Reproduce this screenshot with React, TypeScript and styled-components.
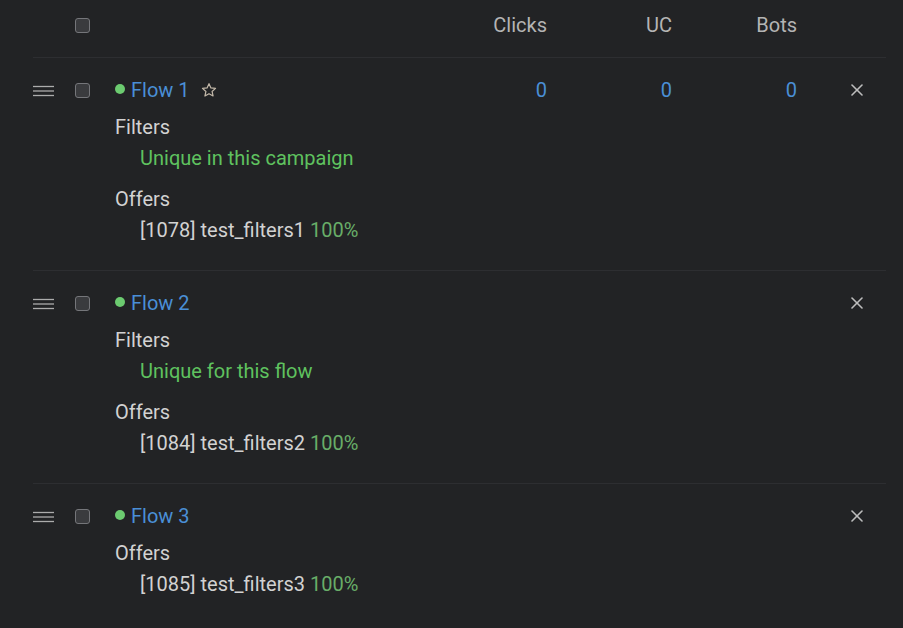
import React, { FC } from 'react';
import styled, { createGlobalStyle } from 'styled-components';

const colors = {
  bg: '#222325',
  divider: '#2d2e31',
  header: '#b4b4b4',
  text: '#d2d2d2',
  blue: '#4a8fd6',
  green: '#5fc25f',
  greenMuted: '#68ad68',
  dot: '#6ccb70',
  icon: '#bdbdbd',
};

const GlobalStyle = createGlobalStyle`
  html, body {
    margin: 0;
    padding: 0;
    background: ${colors.bg};
  }
  body {
    font-family: Roboto, 'Noto Sans', sans-serif;
    font-size: 20px;
    line-height: 24px;
    color: ${colors.text};
  }
`;

const Page = styled.div`
  width: 903px;
  height: 628px;
  box-sizing: border-box;
  padding: 0 17px 0 33px;
  overflow: hidden;
  background: ${colors.bg};
`;

const RowGrid = styled.div`
  display: grid;
  grid-template-columns: 42px 40px 307px 125px 125px 125px 89px;
  align-items: center;
`;

const TableHeader = styled(RowGrid)`
  height: 58px;
  padding-bottom: 7px;
  box-sizing: border-box;
  border-bottom: 1px solid ${colors.divider};
  color: ${colors.header};
`;

const Stat = styled.div<{ $head?: boolean }>`
  text-align: right;
  color: ${(p) => (p.$head ? colors.header : colors.blue)};
`;

const Checkbox = styled.span`
  display: block;
  width: 15px;
  height: 15px;
  box-sizing: border-box;
  border: 1.5px solid #75767a;
  border-radius: 3px;
  background: #3a3b3e;
`;

const FlowRow = styled.div<{ $last?: boolean }>`
  padding: 20px 0 28px;
  border-bottom: 1px solid ${(p) => (p.$last ? 'transparent' : colors.divider)};
`;

const Handle = styled.svg`
  display: block;
  margin-top: 1px;
`;

const NameCell = styled.div`
  display: flex;
  align-items: center;
`;

const Dot = styled.span`
  flex: none;
  width: 10px;
  height: 10px;
  border-radius: 50%;
  background: ${colors.dot};
  margin-right: 6px;
  margin-top: -2px;
`;

const FlowName = styled.span`
  color: ${colors.blue};
`;

const StarIcon = styled.svg`
  flex: none;
  margin-left: 11px;
  margin-top: -1px;
`;

const CloseCell = styled.div`
  padding-left: 54px;
  display: flex;
  align-items: center;
`;

const Body = styled.div`
  margin-left: 82px;
`;

const Section = styled.div`
  margin-top: 13px;
  & + & {
    margin-top: 17px;
  }
`;

const Item = styled.div<{ $green?: boolean }>`
  margin-top: 7px;
  padding-left: 25px;
  color: ${(p) => (p.$green ? colors.green : colors.text)};
`;

const Share = styled.span`
  color: ${colors.greenMuted};
`;

const DragHandle: FC = () => (
  <Handle width="21" height="12" viewBox="0 0 21 12">
    <g stroke="#acacac" strokeWidth="1.3">
      <line x1="0" y1="1.5" x2="21" y2="1.5" />
      <line x1="0" y1="6" x2="21" y2="6" />
      <line x1="0" y1="10.5" x2="21" y2="10.5" />
    </g>
  </Handle>
);

const Star: FC = () => (
  <StarIcon width="16" height="16" viewBox="0 0 24 24">
    <polygon
      points="12,2.5 14.9,8.9 21.8,9.6 16.6,14.2 18.1,21 12,17.5 5.9,21 7.4,14.2 2.2,9.6 9.1,8.9"
      fill="none"
      stroke="#c4b9aa"
      strokeWidth="1.8"
      strokeLinejoin="round"
    />
  </StarIcon>
);

const CloseIcon: FC = () => (
  <svg width="12" height="12" viewBox="0 0 12 12">
    <g stroke={colors.icon} strokeWidth="1.6" strokeLinecap="round">
      <line x1="1" y1="1" x2="11" y2="11" />
      <line x1="11" y1="1" x2="1" y2="11" />
    </g>
  </svg>
);

type Offer = { id: number; name: string; share: number };
type Flow = {
  name: string;
  starred?: boolean;
  stats?: [number, number, number];
  filters?: string[];
  offers: Offer[];
};

const flows: Flow[] = [
  {
    name: 'Flow 1',
    starred: true,
    stats: [0, 0, 0],
    filters: ['Unique in this campaign'],
    offers: [{ id: 1078, name: 'test_filters1', share: 100 }],
  },
  {
    name: 'Flow 2',
    filters: ['Unique for this flow'],
    offers: [{ id: 1084, name: 'test_filters2', share: 100 }],
  },
  {
    name: 'Flow 3',
    offers: [{ id: 1085, name: 'test_filters3', share: 100 }],
  },
];

const FlowItem: FC<{ flow: Flow; last?: boolean }> = ({ flow, last }) => (
  <FlowRow $last={last}>
    <RowGrid>
      <DragHandle />
      <Checkbox />
      <NameCell>
        <Dot />
        <FlowName>{flow.name}</FlowName>
        {flow.starred && <Star />}
      </NameCell>
      <Stat>{flow.stats ? flow.stats[0] : ''}</Stat>
      <Stat>{flow.stats ? flow.stats[1] : ''}</Stat>
      <Stat>{flow.stats ? flow.stats[2] : ''}</Stat>
      <CloseCell>
        <CloseIcon />
      </CloseCell>
    </RowGrid>
    <Body>
      {flow.filters && (
        <Section>
          Filters
          {flow.filters.map((f) => (
            <Item key={f} $green>
              {f}
            </Item>
          ))}
        </Section>
      )}
      <Section>
        Offers
        {flow.offers.map((o) => (
          <Item key={o.id}>
            [{o.id}] {o.name} <Share>{o.share}%</Share>
          </Item>
        ))}
      </Section>
    </Body>
  </FlowRow>
);

const App: FC = () => (
  <>
    <GlobalStyle />
    <Page>
      <TableHeader>
        <span />
        <Checkbox />
        <span />
        <Stat $head>Clicks</Stat>
        <Stat $head>UC</Stat>
        <Stat $head>Bots</Stat>
        <span />
      </TableHeader>
      {flows.map((flow, i) => (
        <FlowItem key={flow.name} flow={flow} last={i === flows.length - 1} />
      ))}
    </Page>
  </>
);

export default App;
